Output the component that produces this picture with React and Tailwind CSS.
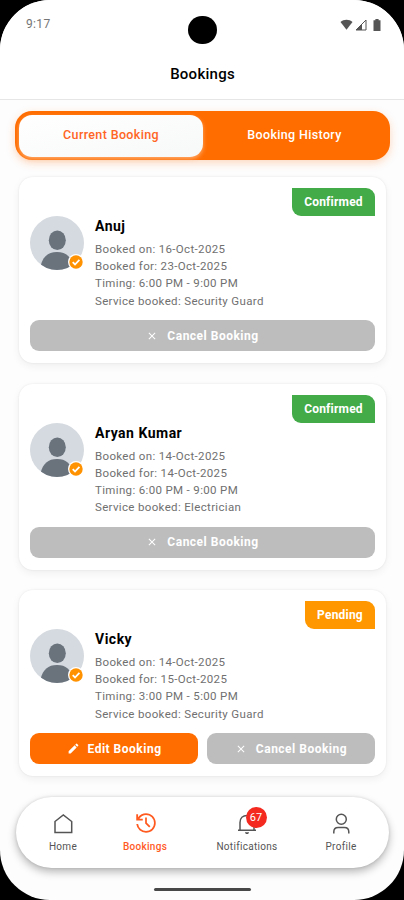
import clsx from "clsx";
import { MdClose, MdEdit } from "react-icons/md";

const bookings = [
  {
    name: "Anuj",
    bookedOn: "16-Oct-2025",
    bookedFor: "23-Oct-2025",
    timing: "6:00 PM - 9:00 PM",
    service: "Security Guard",
    status: "Confirmed",
  },
  {
    name: "Aryan Kumar",
    bookedOn: "14-Oct-2025",
    bookedFor: "14-Oct-2025",
    timing: "6:00 PM - 9:00 PM",
    service: "Electrician",
    status: "Confirmed",
  },
  {
    name: "Vicky",
    bookedOn: "14-Oct-2025",
    bookedFor: "15-Oct-2025",
    timing: "3:00 PM - 5:00 PM",
    service: "Security Guard",
    status: "Pending",
  },
];

const StatusBar = () => (
  <div className="relative flex h-[49px] shrink-0 justify-between pl-[26px] pr-[23px] pt-[16px]">
    <span className="text-[12px] leading-[17px] tracking-[0.35px] text-[#757575]">
      9:17
    </span>
    <div className="absolute left-[188px] top-[16px] h-[28px] w-[29px] rounded-full bg-black" />
    <div className="flex h-[17px] items-center text-[#555]">
      <svg width="13" height="12" viewBox="0 0 13 12" fill="currentColor">
        <path d="M0.5 3C3.8 0 9.2 0 12.5 3L6.5 10.800z" />
      </svg>
      <svg width="12" height="12" viewBox="0 0 12 12" className="ml-[2px]">
        <path d="M1 11L11 1V11z" fill="none" stroke="currentColor" />
        <path d="M1 11L7 5V11z" fill="currentColor" />
      </svg>
      <svg
        width="8"
        height="12"
        viewBox="0 0 8 12"
        fill="currentColor"
        className="ml-[6px]"
      >
        <path d="M2.4 0h3.2v1.2H7.5V12H0.5V1.2H2.4z" />
      </svg>
    </div>
  </div>
);

const Avatar = () => (
  <div className="relative h-[54px] w-[54px] shrink-0">
    <svg width="54" height="54" viewBox="0 0 54 54">
      <clipPath id="avatar">
        <circle cx="27" cy="27" r="27" />
      </clipPath>
      <g clipPath="url(#avatar)">
        <rect width="54" height="54" fill="#d5dae0" />
        <ellipse cx="27.300" cy="24.300" rx="8.500" ry="9.800" fill="#6a727c" />
        <path
          d="M10.500 50C13 40.500 18 36 27 36s14 4.500 16.500 14v6h-33z"
          fill="#6a727c"
        />
      </g>
    </svg>
    <svg
      width="16"
      height="16"
      viewBox="0 0 16 16"
      className="absolute left-[38px] top-[38px]"
    >
      <circle cx="8" cy="8" r="8" fill="#fff" />
      <circle cx="8" cy="8" r="6.700" fill="#ff9200" />
      <path
        d="M4.700 8.200L7 10.500L11.400 5.800"
        fill="none"
        stroke="#fff"
        strokeWidth="1.800"
      />
    </svg>
  </div>
);

const CancelButton = () => (
  <button className="flex h-[31px] flex-1 items-center justify-center rounded-[9px] bg-[#bdbdbd] text-[12px] font-bold tracking-[0.5px] text-white">
    <MdClose size={12} className="mr-[9px]" />
    Cancel Booking
  </button>
);

const BookingCard = ({ booking }) => {
  const pending = booking.status === "Pending";

  return (
    <div className="h-[186px] shrink-0 rounded-[14px] bg-white px-[11px] pt-[11px] shadow-[0_3px_9px_rgba(0,0,0,0.06),0_0_2px_rgba(0,0,0,0.09)]">
      <div className="flex justify-end">
        <span
          className={clsx(
            "flex h-[28px] items-center rounded-tr-[9px] rounded-bl-[9px] text-[12px] font-bold tracking-[0.2px] text-white",
            pending
              ? "w-[70px] justify-center bg-[#ff9800]"
              : "w-[83px] justify-center bg-[#43ab48]"
          )}
        >
          {booking.status}
        </span>
      </div>
      <div className="flex gap-[11px]">
        <Avatar />
        <div className="whitespace-nowrap text-[11.500px] leading-[17.200px] tracking-[0.34px] text-[#707070]">
          <h2 className="mb-[5px] text-[14px] leading-[20px] font-bold tracking-[0.5px] text-black">
            {booking.name}
          </h2>
          <p>Booked on: {booking.bookedOn}</p>
          <p>Booked for: {booking.bookedFor}</p>
          <p>Timing: {booking.timing}</p>
          <p>Service booked: {booking.service}</p>
        </div>
      </div>
      <div className="mt-[10.500px] flex gap-[9px]">
        {pending && (
          <button className="flex h-[31px] flex-1 items-center justify-center rounded-[9px] bg-[#ff6d00] text-[12px] font-bold tracking-[0.5px] text-white">
            <MdEdit size={13} className="mr-[8px]" />
            Edit Booking
          </button>
        )}
        <CancelButton />
      </div>
    </div>
  );
};

const NavItem = ({ label, active, className, children }) => (
  <div
    className={clsx(
      "flex flex-col items-center text-[10px] leading-[13px] tracking-[0.3px]",
      active ? "font-medium text-[#ff5a1f]" : "text-[#555]",
      className
    )}
  >
    <div className="relative mb-[4px] h-[24px] w-[24px]">{children}</div>
    {label}
  </div>
);

const BottomNav = () => (
  <nav className="mr-[15px] ml-[16px] mt-[20.500px] flex h-[71px] shrink-0 rounded-[36px] bg-white pt-[15px] shadow-[0_4px_8px_rgba(0,0,0,0.28),0_0_3px_rgba(0,0,0,0.12)]">
    <NavItem label="Home" className="ml-[17px] w-[60px]">
      <svg width="24" height="24" viewBox="0 0 24 24" fill="none" stroke="#555">
        <path d="M4 9.500L12.300 3L20.700 9.500V20.500H4z" strokeWidth="1.500" />
      </svg>
    </NavItem>
    <NavItem label="Bookings" active className="ml-[22px] w-[60px]">
      <svg
        width="26"
        height="26"
        viewBox="0 0 24 24"
        fill="currentColor"
        className="absolute left-[-0.500px] top-[-1.500px] max-w-none"
      >
        <path d="M12 21q-3.450 0-6.013-2.288T3.050 13H4.700q.35 2.750 2.450 4.550T12 19.400q3.090 0 5.250-2.160T19.400 12T17.250 6.760T12 4.600q-1.900 0-3.500.9T5.900 8H9v1.700H3V4h1.700v2.700q1.300-1.800 3.200-2.750T12 3q1.875 0 3.513.713t2.850 1.925t1.925 2.850T21 12t-.713 3.513t-1.925 2.850t-2.850 1.925T12 21m2.900-4.900L11.200 12.400V7h1.600v4.750l3.300 3.200z" />
      </svg>
    </NavItem>
    <NavItem label="Notifications" className="ml-[32px] w-[80px]">
      <svg width="24" height="24" viewBox="0 0 24 24" fill="none" stroke="#555">
        <path
          d="M3 18.200H21M5 18V10.500C5 6 8 3.500 12 3.500S19 6 19 10.500V18"
          strokeWidth="1.500"
        />
        <path
          d="M10 20.300h4c0 1-.8 1.800-2 1.800s-2-.8-2-1.800z"
          fill="#555"
          stroke="none"
        />
      </svg>
      <span className="absolute left-[10.500px] top-[-5px] flex h-[21px] w-[21px] items-center justify-center rounded-full bg-[#f42a20] text-[11px] tracking-normal text-white">
        67
      </span>
    </NavItem>
    <NavItem label="Profile" className="ml-[24px] w-[60px]">
      <svg width="24" height="24" viewBox="0 0 24 24" fill="none" stroke="#555">
        <circle cx="12.300" cy="7.300" r="5" strokeWidth="1.500" />
        <path
          d="M4.800 21.500V20c0-2.700 1.700-4.500 4.300-4.500h6.400c2.600 0 4.300 1.800 4.300 4.500v1.500"
          strokeWidth="1.500"
        />
      </svg>
    </NavItem>
  </nav>
);

const App = () => {
  return (
    <div className="h-[900px] w-[404px] overflow-hidden bg-black font-['Roboto',sans-serif]">
      <div className="flex h-full flex-col rounded-[50px] bg-[#fdfdfd]">
        <header className="h-[100px] shrink-0 rounded-t-[50px] border-b border-[#e6e6e6] bg-white">
          <StatusBar />
          <h1 className="pt-[1px] pl-[1px] text-center text-[15px] leading-[49px] font-medium tracking-[0.25px] text-black">
            Bookings
          </h1>
        </header>

        <div className="mt-[11px] mr-[14px] ml-[15px] flex h-[49px] shrink-0 rounded-[17px] bg-[#ff6d00] p-[4px] pb-[3px] text-[12.500px] font-medium tracking-[0.35px] shadow-[0_3px_8px_rgba(255,109,0,0.25)]">
          <div className="flex w-[184px] items-center justify-center rounded-[13px] bg-linear-to-br from-white to-[#f7f8f8] pb-[2px] text-[#ff6524] shadow-[0_2px_4px_rgba(255,190,140,0.75)]">
            Current Booking
          </div>
          <div className="flex flex-1 items-center justify-center pb-[2px] text-white">
            Booking History
          </div>
        </div>

        <main className="mt-[17px] mr-[18px] ml-[19px] flex flex-col gap-[20.500px]">
          {bookings.map((booking) => (
            <BookingCard key={booking.name} booking={booking} />
          ))}
        </main>

        <BottomNav />
        <div className="mx-auto mt-[20px] h-[3px] w-[97px] rounded-full bg-[#484848]" />
      </div>
    </div>
  );
};

export default App;
